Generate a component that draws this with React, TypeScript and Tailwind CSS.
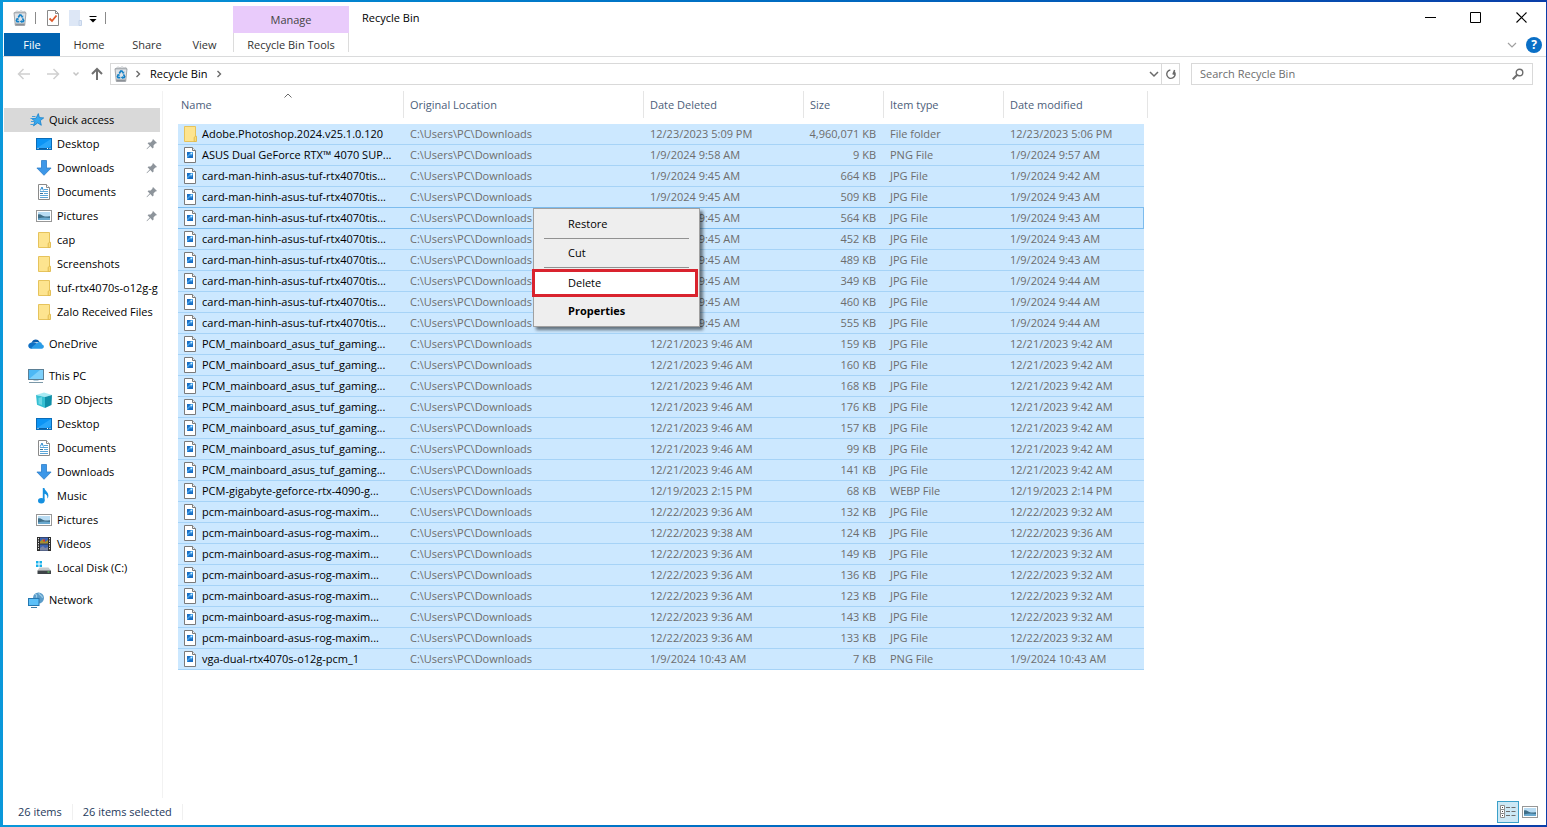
import React from 'react';
import clsx from 'clsx';

type IconProps = { className?: string };

const RecycleIcon: React.FC<IconProps> = ({ className }) => (
  <svg viewBox="0 0 16 16" className={clsx('shrink-0', className)}>
    <path d="M3 2.2 5 .8l2 1 2-1.2 2 1.1 2-.4.6 1.6H2.4z" fill="#e3e6e9" stroke="#a9adb1" strokeWidth=".5" />
    <path d="M2 2.8h12l-1.3 12.6H3.3z" fill="#dfe3e7" stroke="#8d9297" strokeWidth=".8" />
    <path d="M3.4 13.6h9.2l-.2 1.6H3.6z" fill="#8c9196" />
    <path d="M6.3 7.5 7.7 5h1.2l1 1.7M10.5 8.3l1.2 2.3-.6 1h-2M7.3 11.6H5l-.6-1.1 1-1.9" fill="none" stroke="#0f7fc6" strokeWidth="1.6" />
    <path d="M9 7.4h2.2V5.3zM9.6 10v3.1L7.9 11.6zM4 8.6l2.3-.7.6 2z" fill="#0f7fc6" />
  </svg>
);

const FolderIcon = () => (
  <svg viewBox="0 0 16 16" className="w-4 h-4 shrink-0">
    <path d="M2.5.5h11v15h-11z" fill="#fde48f" stroke="#e6c35c" />
    <path d="M12.2 15.5v-4.2l1.3-1h1v5.2z" fill="#fbdc78" stroke="#dfb94c" strokeWidth=".9" />
  </svg>
);

const ImageFileIcon = () => (
  <svg viewBox="0 0 16 16" className="w-4 h-4 shrink-0">
    <path d="M2.5.5h8l3 3v12h-11z" fill="#fff" stroke="#7a7a7a" />
    <path d="M10.5.5v3h3" fill="#eee" stroke="#7a7a7a" />
    <rect x="5" y="5" width="6" height="6" fill="#1b6fc4" />
    <path d="M5 11 8.2 8l1 1L11 6.8V5H9.2L5 9z" fill="#4aa3ea" />
    <rect x="8.6" y="5.8" width="1.4" height="1.4" fill="#d9efff" />
  </svg>
);

const StarIcon = () => (
  <svg viewBox="0 0 16 16" className="w-4 h-4 shrink-0">
    <path d="M10.3 1.6l1.1 4 4.3.3-3.4 2.7 1 4.7-3.6-2.4-4.2 3 1.3-4.7-2.9-2.5 4.1-.4z" fill="#37a8ee" stroke="#1981cb" strokeWidth=".8" />
    <path d="M4 4.500h3.500M2.500 6.500h3M3 9.500h3M2.500 12.500h3" stroke="#2b96de" strokeWidth=".9" />
  </svg>
);

const DesktopIcon = () => (
  <svg viewBox="0 0 16 16" className="w-4 h-4 shrink-0">
    <rect x=".5" y="2.5" width="15" height="11" fill="#0c94f4" stroke="#0a6cb8" />
    <path d="M1 12 15 3v7L11 12z" fill="#2aa6fa" />
    <path d="M1 12.5h14" stroke="#0b5fa3" />
    <path d="M1.5 12.5h1M11 12.5h1M13.5 12.5h1" stroke="#fff" />
  </svg>
);

const DownloadIcon = () => (
  <svg viewBox="0 0 16 16" className="w-4 h-4 shrink-0">
    <path d="M5.5.5h5v7.500h4.600L8 15.300.9 8h4.600z" fill="#3d97e8" stroke="#2c7dc9" strokeWidth=".8" />
  </svg>
);

const DocumentIcon = () => (
  <svg viewBox="0 0 16 16" className="w-4 h-4 shrink-0">
    <path d="M2.500.5h8l3 3v12h-11z" fill="#fff" stroke="#8a8a8a" />
    <path d="M10.500.5v3h3" fill="#fff" stroke="#8a8a8a" />
    <path d="M4.300 6.500 6 3l1.400 3.500" fill="none" stroke="#2a8ad0" />
    <path d="M8 5.500h4M4 7.500h8M8 9.500h4M4 11.500h8M4 13.500h8" stroke="#5aa5d8" />
    <path d="M4 9.500h3" stroke="#3b6f96" />
  </svg>
);

const PictureIcon = () => (
  <svg viewBox="0 0 16 16" className="w-4 h-4 shrink-0">
    <rect x=".5" y="2.500" width="15" height="11" fill="#fff" stroke="#979797" />
    <rect x="2" y="4" width="12" height="8" fill="#b9dcf3" />
    <path d="M2 6.500c3-.8 4 1.800 7 2 2 .2 3-.3 5-.2V12H2z" fill="#3f6e88" />
    <path d="M2 10.500c4-1.400 8-1.200 12-.6V12H2z" fill="#6aa9cf" />
  </svg>
);

const OneDriveIcon = () => (
  <svg viewBox="0 0 16 16" className="w-4 h-4 shrink-0">
    <path d="M3.500 6.700C4.600 3.200 9.600 2 11.600 6z" fill="#0b5cab" />
    <path d="M3.600 12.700C-.9 12.800-.8 7 3.500 6.400c2.800-.6 4.600.7 6.500 2z" fill="#0f70c4" />
    <path d="M9 7.300c1.400-2 4.600-1.500 5 1.100 2.700.6 2.400 4.300-.3 4.300H3.300C3 12 6.500 8.500 9 7.300z" fill="#2a9be6" />
  </svg>
);

const ComputerIcon = () => (
  <svg viewBox="0 0 16 16" className="w-4 h-4 shrink-0">
    <rect x=".5" y="1.500" width="15" height="10" fill="#4db8f5" stroke="#5b7f95" />
    <path d="M1 11 12 2h3v9z" fill="#7dd0fb" />
    <path d="M5.500 12.500h5" stroke="#b6cfdd" />
    <path d="M1 14.500h14" stroke="#7b98a8" />
  </svg>
);

const CubeIcon = () => (
  <svg viewBox="0 0 16 16" className="w-4 h-4 shrink-0">
    <path d="M0 3 8 .5 16 3l-7 2z" fill="#a8eaf3" />
    <path d="M0 3l9 2v11L1 12.800z" fill="#35bfd2" />
    <path d="M9 5l7-2-.5 10L9 16z" fill="#0f8fa8" />
    <path d="M2.500 6 6 5v8l-3.500-1z" fill="#6ad6e4" />
  </svg>
);

const MusicIcon = () => (
  <svg viewBox="0 0 16 16" className="w-4 h-4 shrink-0">
    <ellipse cx="5.300" cy="12.800" rx="3.300" ry="2.700" fill="#1590e0" />
    <path d="M6.800 0h1.600c.3 3 4.800 4 3.900 8.800-.1.700-.6 1.400-1 1.700.5-3-1-4-2.700-4.700v7H6.800z" fill="#1590e0" />
  </svg>
);

const VideoIcon = () => (
  <svg viewBox="0 0 16 16" className="w-4 h-4 shrink-0">
    <rect x="1" y="1" width="14" height="14" fill="#2c2c2c" />
    <path d="M2.500 2v12M13.500 2v12" stroke="#e6e6e6" strokeDasharray="1.300 1.200" />
    <rect x="4" y="1.500" width="8" height="6" fill="#3d62b2" />
    <rect x="4" y="8.500" width="8" height="6" fill="#3d62b2" />
    <path d="M4 5.500 7 3l2 3 3-2v3.500H4z" fill="#a8902c" />
    <path d="M4 12l3-2 2 2 3-1v3.500H4z" fill="#7c86a5" />
    <rect x="7" y="3.500" width="2" height="2" fill="#d43c2d" />
  </svg>
);

const DiskIcon = () => (
  <svg viewBox="0 0 16 16" className="w-4 h-4 shrink-0">
    <path d="M0 1h2.500v2.500H0zM3.500 1H6v2.500H3.500zM0 4.500h2.500V7H0zM3.500 4.500H6V7H3.500z" fill="#17b0ea" />
    <path d="M3.500 7.500h9L15 10.500H1.500z" fill="#c5c9cc" />
    <rect x="1.500" y="10.500" width="13.500" height="3.500" fill="#3f4448" />
    <rect x="11.500" y="11.500" width="2" height="1" fill="#67e36a" />
  </svg>
);

const NetworkIcon = () => (
  <svg viewBox="0 0 16 16" className="w-4 h-4 shrink-0">
    <circle cx="10.500" cy="6" r="5.500" fill="#5b9cc9" />
    <path d="M7 2c2 .8 2 2.500 1 3.500M11 .8c-1 2 3 2 3.500 5" fill="none" stroke="#9ccbe6" strokeWidth="1.200" />
    <rect x=".5" y="6.500" width="10.500" height="7" fill="#5cc0f8" stroke="#2577b0" />
    <path d="M3 15.500h6" stroke="#3d7ba5" />
  </svg>
);

const PinIcon = () => (
  <svg viewBox="0 0 12 12" className="w-3 h-3 shrink-0">
    <path d="M7 1l4 4-1.200.6-.5-.1-1.800 1.900.1 2.100-1 .9L4.300 8.100 1.200 11l-.6.2.2-.7 2.900-3L1.600 5.300l.9-.9 2.200.1 1.800-1.900V2z" fill="#8d949b" />
  </svg>
);

type NavItem = { label: string; icon: React.ReactNode; top?: boolean; pinned?: boolean; active?: boolean };

const navGroups: NavItem[][] = [
  [
    { label: 'Quick access', icon: <StarIcon />, top: true, active: true },
    { label: 'Desktop', icon: <DesktopIcon />, pinned: true },
    { label: 'Downloads', icon: <DownloadIcon />, pinned: true },
    { label: 'Documents', icon: <DocumentIcon />, pinned: true },
    { label: 'Pictures', icon: <PictureIcon />, pinned: true },
    { label: 'cap', icon: <FolderIcon /> },
    { label: 'Screenshots', icon: <FolderIcon /> },
    { label: 'tuf-rtx4070s-o12g-g', icon: <FolderIcon /> },
    { label: 'Zalo Received Files', icon: <FolderIcon /> },
  ],
  [{ label: 'OneDrive', icon: <OneDriveIcon />, top: true }],
  [
    { label: 'This PC', icon: <ComputerIcon />, top: true },
    { label: '3D Objects', icon: <CubeIcon /> },
    { label: 'Desktop', icon: <DesktopIcon /> },
    { label: 'Documents', icon: <DocumentIcon /> },
    { label: 'Downloads', icon: <DownloadIcon /> },
    { label: 'Music', icon: <MusicIcon /> },
    { label: 'Pictures', icon: <PictureIcon /> },
    { label: 'Videos', icon: <VideoIcon /> },
    { label: 'Local Disk (C:)', icon: <DiskIcon /> },
  ],
  [{ label: 'Network', icon: <NetworkIcon />, top: true }],
];

const LOCATION = 'C:\\Users\\PC\\Downloads';
const CARD = 'card-man-hinh-asus-tuf-rtx4070tis...';
const TUF = 'PCM_mainboard_asus_tuf_gaming...';
const ROG = 'pcm-mainboard-asus-rog-maxim...';

// name, date deleted, size, item type, date modified
const files: string[][] = [
  ['Adobe.Photoshop.2024.v25.1.0.120', '12/23/2023 5:09 PM', '4,960,071 KB', 'File folder', '12/23/2023 5:06 PM'],
  ['ASUS Dual GeForce RTX™ 4070 SUP...', '1/9/2024 9:58 AM', '9 KB', 'PNG File', '1/9/2024 9:57 AM'],
  [CARD, '1/9/2024 9:45 AM', '664 KB', 'JPG File', '1/9/2024 9:42 AM'],
  [CARD, '1/9/2024 9:45 AM', '509 KB', 'JPG File', '1/9/2024 9:43 AM'],
  [CARD, '1/9/2024 9:45 AM', '564 KB', 'JPG File', '1/9/2024 9:43 AM'],
  [CARD, '1/9/2024 9:45 AM', '452 KB', 'JPG File', '1/9/2024 9:43 AM'],
  [CARD, '1/9/2024 9:45 AM', '489 KB', 'JPG File', '1/9/2024 9:43 AM'],
  [CARD, '1/9/2024 9:45 AM', '349 KB', 'JPG File', '1/9/2024 9:44 AM'],
  [CARD, '1/9/2024 9:45 AM', '460 KB', 'JPG File', '1/9/2024 9:44 AM'],
  [CARD, '1/9/2024 9:45 AM', '555 KB', 'JPG File', '1/9/2024 9:44 AM'],
  [TUF, '12/21/2023 9:46 AM', '159 KB', 'JPG File', '12/21/2023 9:42 AM'],
  [TUF, '12/21/2023 9:46 AM', '160 KB', 'JPG File', '12/21/2023 9:42 AM'],
  [TUF, '12/21/2023 9:46 AM', '168 KB', 'JPG File', '12/21/2023 9:42 AM'],
  [TUF, '12/21/2023 9:46 AM', '176 KB', 'JPG File', '12/21/2023 9:42 AM'],
  [TUF, '12/21/2023 9:46 AM', '157 KB', 'JPG File', '12/21/2023 9:42 AM'],
  [TUF, '12/21/2023 9:46 AM', '99 KB', 'JPG File', '12/21/2023 9:42 AM'],
  [TUF, '12/21/2023 9:46 AM', '141 KB', 'JPG File', '12/21/2023 9:42 AM'],
  ['PCM-gigabyte-geforce-rtx-4090-g...', '12/19/2023 2:15 PM', '68 KB', 'WEBP File', '12/19/2023 2:14 PM'],
  [ROG, '12/22/2023 9:36 AM', '132 KB', 'JPG File', '12/22/2023 9:32 AM'],
  [ROG, '12/22/2023 9:38 AM', '124 KB', 'JPG File', '12/22/2023 9:36 AM'],
  [ROG, '12/22/2023 9:36 AM', '149 KB', 'JPG File', '12/22/2023 9:32 AM'],
  [ROG, '12/22/2023 9:36 AM', '136 KB', 'JPG File', '12/22/2023 9:32 AM'],
  [ROG, '12/22/2023 9:36 AM', '123 KB', 'JPG File', '12/22/2023 9:32 AM'],
  [ROG, '12/22/2023 9:36 AM', '143 KB', 'JPG File', '12/22/2023 9:32 AM'],
  [ROG, '12/22/2023 9:36 AM', '133 KB', 'JPG File', '12/22/2023 9:32 AM'],
  ['vga-dual-rtx4070s-o12g-pcm_1', '1/9/2024 10:43 AM', '7 KB', 'PNG File', '1/9/2024 10:43 AM'],
];

const FOCUSED_ROW = 4;

const TitleBar = () => (
  <div className="flex h-[31px]">
    <div className="flex items-center w-[230px] pl-[9px]">
      <RecycleIcon className="w-4 h-4" />
      <span className="w-px h-3 ml-[7px] bg-[#8a8a8a]" />
      <button aria-label="Properties" className="ml-[9px]">
        <svg viewBox="0 0 16 16" className="w-4 h-4">
          <path d="M2.500.5h8l3 3v12h-11z" fill="#fff" stroke="#8a8a8a" />
          <path d="M10.500.5v3h3" fill="none" stroke="#8a8a8a" />
          <path d="M4.500 8.500 7 11l4.500-5.500" fill="none" stroke="#e0592a" strokeWidth="1.800" />
        </svg>
      </button>
      <button aria-label="New folder" className="ml-[6px]">
        <svg viewBox="0 0 16 16" className="w-4 h-4">
          <path d="M2 0h11v16H2z" fill="#dde7f6" />
          <path d="M12 10.500h2.500v5H12z" fill="#dde7f6" stroke="#c5d4ea" />
        </svg>
      </button>
      <button aria-label="Customize Quick Access Toolbar" className="ml-[6px] pt-[2px]">
        <svg viewBox="0 0 8 8" className="w-2 h-2">
          <path d="M.5 1.500h7" stroke="#000" />
          <path d="M.5 4h7L4 7.500z" fill="#000" />
        </svg>
      </button>
      <span className="w-px h-3 ml-2 bg-[#8a8a8a]" />
    </div>
    <div className="flex items-center justify-center w-[116px] mt-1 bg-[#e9cbfb] text-[#444]">Manage</div>
    <h1 className="flex items-center pl-[13px]">Recycle Bin</h1>
    <div className="flex ml-auto pr-px">
      <button aria-label="Minimize" className="flex items-center justify-center w-[46px]">
        <svg viewBox="0 0 11 11" className="w-[11px] h-[11px]"><path d="M0 5.500h11" stroke="#000" /></svg>
      </button>
      <button aria-label="Maximize" className="flex items-center justify-center w-[45px]">
        <svg viewBox="0 0 11 11" className="w-[11px] h-[11px]"><path d="M.5.5h10v10H.5z" fill="none" stroke="#000" /></svg>
      </button>
      <button aria-label="Close" className="flex items-center justify-center w-[47px]">
        <svg viewBox="0 0 11 11" className="w-[11px] h-[11px]"><path d="M.5.5l10 10M10.500.5l-10 10" stroke="#000" strokeWidth="1.100" /></svg>
      </button>
    </div>
  </div>
);

const Ribbon = () => (
  <div className="flex h-6 pl-px border-b border-[#dadbdc] text-[#333]">
    <button className="w-[56px] bg-[#0063b1] text-white">File</button>
    <button className="w-[58px]">Home</button>
    <button className="w-[58px]">Share</button>
    <button className="w-[57px]">View</button>
    <button className="w-[116px] mb-1 pt-1 border-x border-[#dcdcdc]">Recycle Bin Tools</button>
    <div className="flex items-center gap-[9px] ml-auto pr-1">
      <button aria-label="Minimize the Ribbon">
        <svg viewBox="0 0 10 10" className="w-[10px] h-[10px]"><path d="M1 3l4 4 4-4" fill="none" stroke="#a0a0a0" strokeWidth="1.200" /></svg>
      </button>
      <button aria-label="Help" className="flex items-center justify-center w-4 h-4 rounded-full bg-[#0a6fc6] text-white text-[12px] font-bold">?</button>
    </div>
  </div>
);

const AddressBar = () => (
  <div className="flex items-center h-[34px] pl-[6px] pr-[13px]">
    <button aria-label="Back" className="flex justify-center w-[29px]">
      <svg viewBox="0 0 14 14" className="w-[14px] h-[14px]"><path d="M13 7H1.500M6.500 2l-5 5 5 5" fill="none" stroke="#d0d0d0" strokeWidth="1.500" /></svg>
    </button>
    <button aria-label="Forward" className="flex justify-center w-[29px]">
      <svg viewBox="0 0 14 14" className="w-[14px] h-[14px]"><path d="M1 7h11.500M7.500 2l5 5-5 5" fill="none" stroke="#d0d0d0" strokeWidth="1.500" /></svg>
    </button>
    <button aria-label="Recent locations" className="flex justify-center w-[18px]">
      <svg viewBox="0 0 8 8" className="w-2 h-2"><path d="M1.500 2.500 4 5l2.500-2.500" fill="none" stroke="#c4c4c4" strokeWidth="1.500" /></svg>
    </button>
    <button aria-label="Up" className="flex w-[25px] pl-[5px]">
      <svg viewBox="0 0 14 14" className="w-[14px] h-[14px]"><path d="M7 13V2M2 7l5-5 5 5" fill="none" stroke="#707070" strokeWidth="2" /></svg>
    </button>
    <div className="flex flex-1 items-center h-[22px] pl-[2px] border border-[#d9d9d9]">
      <RecycleIcon className="w-4 h-4" />
      <svg viewBox="0 0 8 8" className="w-2 h-2 ml-[5px]"><path d="M2.500 1 5.500 4l-3 3" fill="none" stroke="#6a6a6a" strokeWidth="1.400" /></svg>
      <button className="ml-2">Recycle Bin</button>
      <svg viewBox="0 0 8 8" className="w-2 h-2 ml-2"><path d="M2.500 1 5.500 4l-3 3" fill="none" stroke="#6a6a6a" strokeWidth="1.400" /></svg>
      <button aria-label="Previous locations" className="flex items-center justify-center w-[15px] h-full ml-auto border-r border-[#d9d9d9]">
        <svg viewBox="0 0 10 10" className="w-[10px] h-[10px]"><path d="M1 3l4 4 4-4" fill="none" stroke="#6a6a6a" strokeWidth="1.500" /></svg>
      </button>
      <button aria-label="Refresh" className="flex items-center justify-center w-[17px]">
        <svg viewBox="0 0 12 12" className="w-3 h-3"><path d="M4 2.500a4.200 4.200 0 1 0 4.500.3M9.500 5.200H8V1" transform="rotate(20 6 6)" fill="none" stroke="#6a6a6a" strokeWidth="1.400" /></svg>
      </button>
    </div>
    <label className="flex items-center w-[342px] h-[22px] ml-[11px] px-2 border border-[#d9d9d9]">
      <input type="search" aria-label="Search Recycle Bin" placeholder="Search Recycle Bin" className="flex-1 min-w-0 outline-none placeholder:text-[#6d6d6d]" />
      <svg viewBox="0 0 12 12" className="w-3 h-3">
        <circle cx="7.500" cy="4.500" r="3.300" fill="none" stroke="#6d6d6d" strokeWidth="1.400" />
        <path d="M5 7 .8 11.200" stroke="#6d6d6d" strokeWidth="2" />
      </svg>
    </label>
  </div>
);

const Sidebar = () => (
  <nav className="flex flex-col gap-2 w-[160px] shrink-0 pt-[17px] pl-px pr-[2px] border-r border-[#f2f2f2]">
    {navGroups.map((group, g) => (
      <ul key={g}>
        {group.map((item) => (
          <li key={item.label}>
            <a
              href="#"
              className={clsx(
                'flex items-center gap-[5px] h-6 whitespace-nowrap',
                item.top ? 'pl-6' : 'pl-8',
                item.pinned && 'pr-[2px]',
                item.active && 'bg-[#d9d9d9]'
              )}
            >
              {item.icon}
              <span className="flex-1">{item.label}</span>
              {item.pinned && <PinIcon />}
            </a>
          </li>
        ))}
      </ul>
    ))}
  </nav>
);

const headClass = 'flex items-center w-full h-[27px] border-r border-[#e5e5e5] text-left';

const FileTable = () => (
  <table className="table-fixed w-[970px] border-separate border-spacing-0 whitespace-nowrap">
    <colgroup>
      <col className="w-[226px]" />
      <col className="w-[240px]" />
      <col className="w-[160px]" />
      <col className="w-[80px]" />
      <col className="w-[120px]" />
      <col className="w-[140px]" />
      <col className="w-[4px]" />
    </colgroup>
    <thead className="text-[#4c607a]">
      <tr>
        <th className="h-[33px] p-0 align-top font-normal">
          <button className={clsx(headClass, 'relative pl-[3px]')}>
            Name
            <svg viewBox="0 0 8 5" className="absolute top-[2px] left-[47%] w-2 h-[5px]"><path d="M.5 4.500 4 1l3.500 3.500" fill="none" stroke="#6a6a6a" /></svg>
          </button>
        </th>
        <th className="p-0 align-top font-normal"><button className={clsx(headClass, 'pl-[6px]')}>Original Location</button></th>
        <th className="p-0 align-top font-normal"><button className={clsx(headClass, 'pl-[6px]')}>Date Deleted</button></th>
        <th className="p-0 align-top font-normal"><button className={clsx(headClass, 'pl-[6px]')}>Size</button></th>
        <th className="p-0 align-top font-normal"><button className={clsx(headClass, 'pl-[6px]')}>Item type</button></th>
        <th colSpan={2} className="p-0 align-top font-normal"><button className={clsx(headClass, 'pl-[6px]')}>Date modified</button></th>
      </tr>
    </thead>
    <tbody className="text-[#6d6d6d]">
      {files.map(([name, deleted, size, type, modified], i) => {
        const cell = clsx(
          'h-[21px] p-0 border-b bg-[#cce8ff]',
          i === FOCUSED_ROW || i === FOCUSED_ROW - 1 ? 'border-[#7dbcee]' : 'border-[#a6d3f7]'
        );
        return (
          <tr key={i}>
            <td className={clsx(cell, 'pl-1')}>
              <div className="flex items-center gap-1 text-black">
                {i === 0 ? <FolderIcon /> : <ImageFileIcon />}
                {name}
              </div>
            </td>
            <td className={clsx(cell, 'pl-[6px]')}>{LOCATION}</td>
            <td className={clsx(cell, 'pl-[6px]')}>{deleted}</td>
            <td className={clsx(cell, 'pr-2 text-right')}>{size}</td>
            <td className={clsx(cell, 'pl-[6px]')}>{type}</td>
            <td className={clsx(cell, 'pl-[6px]', i === FOCUSED_ROW && 'border-r')}>{modified}</td>
            <td />
          </tr>
        );
      })}
    </tbody>
  </table>
);

const ContextMenu = () => (
  <div
    role="menu"
    className="absolute left-[370px] top-[117px] flex flex-col w-[167px] py-1 border border-[#a0a0a0] bg-[#eeeeee] shadow-[3px_3px_3px_rgba(0,0,0,0.5)]"
  >
    <button role="menuitem" className="h-[22px] pl-[34px] text-left">Restore</button>
    <hr className="mx-[10px] my-[3px] border-[#919191]" />
    <button role="menuitem" className="h-[22px] pl-[34px] text-left">Cut</button>
    <hr className="mx-[10px] mt-[3px] mb-px border-[#919191]" />
    <button role="menuitem" className="h-7 -ml-[2px] mr-px mb-[3px] pl-[33px] border-3 border-[#d9232e] bg-white text-left">Delete</button>
    <button role="menuitem" className="h-[22px] pl-[34px] text-left font-bold">Properties</button>
  </div>
);

const StatusBar = () => (
  <footer className="flex items-center h-[27px] pl-[15px] pr-2 text-[#1e395b]">
    <span className="pr-[10px] border-r border-[#f0f0f0]">26 items</span>
    <span className="px-[10px] border-r border-[#f0f0f0]">26 items selected</span>
    <div className="flex items-center gap-[3px] ml-auto">
      <button aria-label="Details view" className="flex items-center justify-center w-[22px] h-[22px] border border-[#3ba0c9] bg-[#cce8f5]">
        <svg viewBox="0 0 18 14" className="w-[18px] h-[14px]">
          <path d="M1.500.5h4v4h-4zM1.500 4.500h4v4h-4zM1.500 8.500h4v4h-4z" fill="#fff" stroke="#8c8c8c" />
          <path d="M3 2.500h1M3 6.500h1M3 10.500h1" stroke="#444" />
          <path d="M7 2.500h4M12.500 2.500h4M7 6.500h4M12.500 6.500h4M7 10.500h4M12.500 10.500h4" stroke="#6d6d6d" />
        </svg>
      </button>
      <button aria-label="Large thumbnails view"><PictureIcon /></button>
    </div>
  </footer>
);

export default function App() {
  return (
    <div className="flex min-h-screen bg-gradient-to-r from-[#0a98da] to-[#0a3ea8] pt-[2px] pr-px pb-[2px] pl-[3px] font-['Open_Sans','Noto_Sans',sans-serif] text-[11px] leading-4 text-black">
      <div className="flex flex-1 flex-col min-w-0 bg-white">
        <TitleBar />
        <Ribbon />
        <AddressBar />
        <div className="flex flex-1">
          <Sidebar />
          <main className="relative flex-1 pl-[15px]">
            <FileTable />
            <ContextMenu />
          </main>
        </div>
        <StatusBar />
      </div>
    </div>
  );
}
